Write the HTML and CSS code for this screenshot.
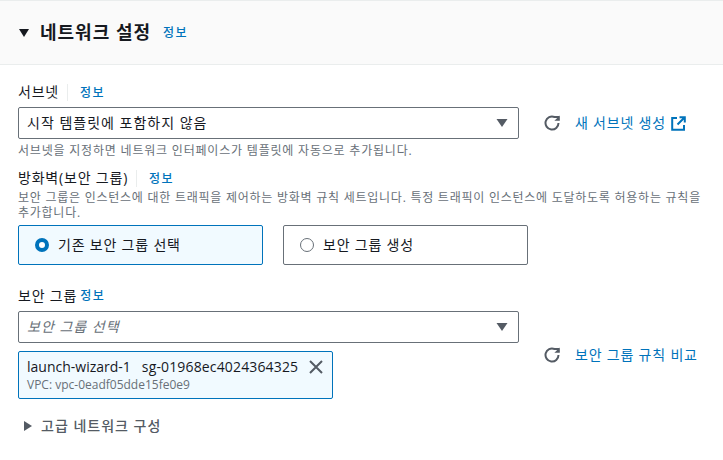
FILE: index.html
```html
<!DOCTYPE html>
<html lang="ko">
	<head>
		<meta charset="UTF-8" />
		<meta name="viewport" content="width=device-width, initial-scale=1.0" />
		<title>네트워크 설정</title>
		<link rel="stylesheet" href="styles.css">
	</head>
	<body>
		<header class="panel-header">
			<svg class="caret-down" width="12" height="10" viewBox="0 0 12 10"><path d="M1 1h10L6 9z" /></svg>
			<h2>네트워크 설정</h2>
			<a class="info info-title">정보</a>
		</header>

		<main class="panel-body">
			<div class="label-row label-subnet">
				<label>서브넷</label>
				<a class="info info-split">정보</a>
			</div>
			<div class="field-row">
				<div class="field-col">
					<div class="select">
						<span>시작 템플릿에 포함하지 않음</span>
						<svg class="select-caret" width="12" height="10" viewBox="0 0 12 10"><path d="M0.500 1h11L6 9z" /></svg>
					</div>
				</div>
				<div class="actions">
					<svg class="refresh" width="16" height="16" viewBox="0 0 16 16"><path d="M14.500 8A6.500 6.500 0 1 1 10.500 2H15" /><path class="refresh-head" d="M15.800 0.400v5.400h-5.400z" /></svg>
					<a class="link">새 서브넷 생성</a>
					<svg class="external" width="15" height="15" viewBox="0 0 15 15"><path d="M6 2H1.200v11.800h11.800V9" /><path d="M6.500 8.500L13 2M8.500 1.200h5.300v5.300" /></svg>
				</div>
			</div>
			<p class="help">서브넷을 지정하면 네트워크 인터페이스가 템플릿에 자동으로 추가됩니다.</p>

			<div class="label-row label-firewall">
				<label>방화벽(보안 그룹)</label>
				<a class="info info-split">정보</a>
			</div>
			<p class="help help-wrap">보안 그룹은 인스턴스에 대한 트래픽을 제어하는 방화벽 규칙 세트입니다. 특정 트래픽이 인스턴스에 도달하도록 허용하는 규칙을 추가합니다.</p>
			<div class="tiles">
				<div class="tile tile-on">
					<span class="radio radio-on"></span>
					<span>기존 보안 그룹 선택</span>
				</div>
				<div class="tile">
					<span class="radio"></span>
					<span>보안 그룹 생성</span>
				</div>
			</div>

			<div class="label-row label-group">
				<label>보안 그룹</label>
				<a class="info">정보</a>
			</div>
			<div class="field-row">
				<div class="field-col">
					<div class="select">
						<span class="placeholder">보안 그룹 선택</span>
						<svg class="select-caret" width="12" height="10" viewBox="0 0 12 10"><path d="M0.500 1h11L6 9z" /></svg>
					</div>
					<div class="token">
						<div class="token-text">
							<div class="token-name"><span>launch-wizard-1</span><span class="token-id">sg-01968ec4024364325</span></div>
							<div class="token-vpc">VPC: vpc-0eadf05dde15fe0e9</div>
						</div>
						<svg class="token-close" width="14" height="14" viewBox="0 0 14 14"><path d="M1 1l12 12M13 1L1 13" /></svg>
					</div>
				</div>
				<div class="actions">
					<svg class="refresh" width="16" height="16" viewBox="0 0 16 16"><path d="M14.500 8A6.500 6.500 0 1 1 10.500 2H15" /><path class="refresh-head" d="M15.800 0.400v5.400h-5.400z" /></svg>
					<a class="link">보안 그룹 규칙 비교</a>
				</div>
			</div>

			<div class="advanced">
				<svg class="caret-right" width="10" height="12" viewBox="0 0 10 12"><path d="M1 1v10l8-5z" /></svg>
				<span>고급 네트워크 구성</span>
			</div>
		</main>
	</body>
</html>
```

FILE: styles.css
```css
* {
	box-sizing: border-box;
	margin: 0;
	padding: 0;
}
body {
	font-family: "Open Sans", "Noto Sans CJK KR", sans-serif;
	font-size: 14px;
	line-height: 20px;
	letter-spacing: 0.8px;
	color: #16191f;
	background-color: white;
	height: 460px;
	overflow: hidden;
}
a {
	color: #0073bb;
}
.panel-header {
	display: flex;
	align-items: center;
	height: 65px;
	padding: 0 18px;
	background-color: #fafafa;
	border-top: 1px solid #eaeded;
	border-bottom: 1px solid #eaeded;
}
.panel-header h2 {
	font-size: 18px;
	font-weight: 700;
	line-height: 24px;
	letter-spacing: 1px;
	margin-left: 10px;
	margin-top: -2px;
}
.caret-down path,
.select-caret path {
	fill: #545b64;
}
.caret-down path {
	fill: #16191f;
}
.caret-right path {
	fill: #545b64;
}
.info {
	font-size: 12px;
	font-weight: 500;
	line-height: 16px;
	letter-spacing: 1.5px;
}
.info-title {
	margin-left: 12px;
}
.panel-body {
	padding: 0 18px;
}
.label-row {
	display: flex;
	align-items: center;
	height: 20px;
}
.label-subnet {
	margin-top: 17px;
	margin-bottom: 5px;
}
.label-firewall {
	margin-top: 10px;
}
.label-group {
	margin-top: 21px;
	margin-bottom: 5px;
	gap: 3px;
}
.info-split {
	line-height: 17px;
	border-left: 1px solid #eaeded;
	margin-left: 8px;
	padding-left: 12px;
}
.field-row {
	display: flex;
	align-items: center;
}
.field-col {
	width: 501px;
}
.select {
	display: flex;
	align-items: center;
	justify-content: space-between;
	height: 32px;
	padding: 0 9px 0 8px;
	letter-spacing: 1px;
	border: 1px solid #687078;
	border-radius: 2px;
}
.select-caret {
	margin-right: 1px;
}
.placeholder {
	font-style: italic;
	color: #687078;
}
.actions {
	display: flex;
	align-items: center;
	margin-left: 25px;
}
.refresh path {
	fill: none;
	stroke: #545b64;
	stroke-width: 2;
}
.refresh .refresh-head {
	fill: #545b64;
	stroke: none;
}
.link {
	margin-left: 15px;
	font-size: 14px;
}
.external {
	margin-left: 5px;
}
.external path {
	fill: none;
	stroke: #0073bb;
	stroke-width: 2;
}
.help {
	font-size: 12px;
	line-height: 15px;
	letter-spacing: 0.8px;
	color: #687078;
}
.field-row + .help {
	margin-top: 4px;
}
.help-wrap {
	width: 690px;
	margin-top: 2px;
	letter-spacing: 0.75px;
}
.tiles {
	display: flex;
	gap: 20px;
	margin-top: 5px;
}
.tile {
	display: flex;
	align-items: center;
	gap: 9px;
	width: 245px;
	height: 40px;
	padding: 0 16px;
	border: 1px solid #687078;
	border-radius: 2px;
}
.tile-on {
	background-color: #f1faff;
	border-color: #0073bb;
}
.radio {
	width: 14px;
	height: 14px;
	border: 1px solid #687078;
	border-radius: 50%;
	background-color: white;
}
.radio-on {
	border: 4px solid #0073bb;
}
.token {
	display: flex;
	align-items: flex-start;
	justify-content: space-between;
	width: 315px;
	height: 48px;
	margin-top: 8px;
	padding: 5px 9px 5px 8px;
	letter-spacing: 0;
	background-color: #f1faff;
	border: 1px solid #0073bb;
	border-radius: 2px;
}
.token-name {
	display: flex;
	gap: 11px;
	line-height: 20px;
}
.token-id {
	letter-spacing: 0.15px;
}
.token-vpc {
	font-size: 12px;
	line-height: 16px;
	color: #687078;
}
.token-close {
	margin-top: 3px;
}
.token-close path {
	fill: none;
	stroke: #545b64;
	stroke-width: 2;
}
.advanced {
	display: flex;
	align-items: center;
	gap: 8px;
	margin-top: 17px;
	padding-left: 5px;
	font-weight: 500;
	letter-spacing: 1px;
	color: #545b64;
}
```
